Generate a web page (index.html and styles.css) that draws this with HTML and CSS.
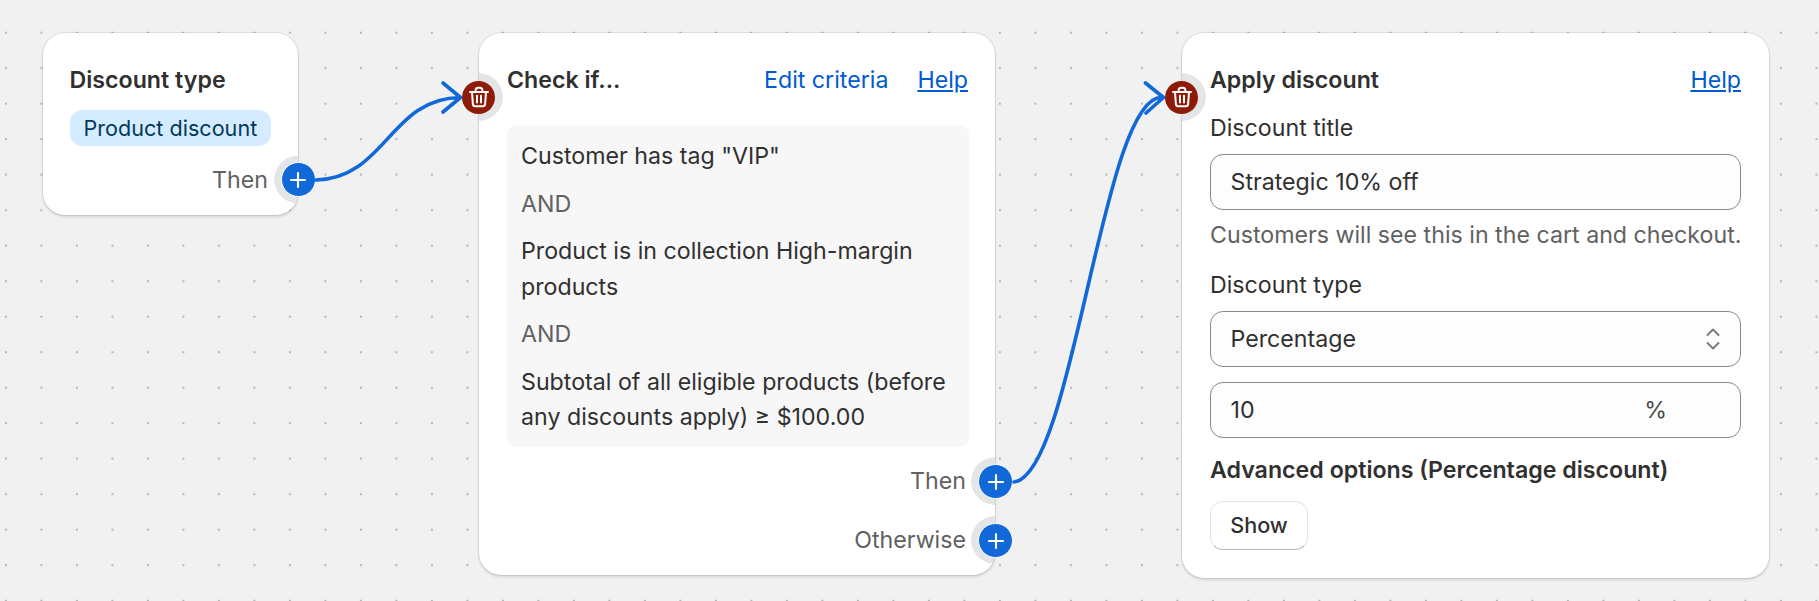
FILE: index.html
```html
<!DOCTYPE html>
<html lang="en">
<head>
<meta charset="utf-8">
<title>Discount flow</title>
<link rel="stylesheet" href="styles.css">
</head>
<body>
<main class="canvas">
  <section class="node node-type">
    <h2 class="title">Discount type</h2>
    <div class="badge-row"><span class="badge">Product discount</span></div>
    <div class="outlet"><span class="outlet-label">Then</span></div>
    <button class="handle add handle-type" aria-label="Add"><svg viewBox="0 0 20 20"><path d="M10 3.6v12.8M3.6 10h12.8"/></svg></button>
  </section>

  <section class="node node-check">
    <header class="head">
      <h2 class="title">Check if...</h2>
      <nav class="links"><a class="link plain">Edit criteria</a><a class="link">Help</a></nav>
    </header>
    <div class="criteria">
      <p>Customer has tag "VIP"</p>
      <p class="muted">AND</p>
      <p>Product is in collection High-margin products</p>
      <p class="muted">AND</p>
      <p>Subtotal of all eligible products (before any discounts apply) ≥ $100.00</p>
    </div>
    <div class="outlets">
      <div class="outlet"><span class="outlet-label">Then</span></div>
      <div class="outlet"><span class="outlet-label">Otherwise</span></div>
    </div>
    <button class="handle del handle-left" aria-label="Delete"><svg viewBox="0 0 24 24"><path d="M3 7h18M8.6 6.6V5.4A2.6 2.6 0 0 1 11.2 2.8h1.6a2.6 2.6 0 0 1 2.6 2.6v1.2M5 7.4l.9 11.8a2.2 2.2 0 0 0 2.2 2h7.8a2.2 2.2 0 0 0 2.2-2L19 7.4M10 10.8v6.6M14 10.8v6.6"/></svg></button>
    <button class="handle add handle-then" aria-label="Add"><svg viewBox="0 0 20 20"><path d="M10 3.6v12.8M3.6 10h12.8"/></svg></button>
    <button class="handle add handle-other" aria-label="Add"><svg viewBox="0 0 20 20"><path d="M10 3.6v12.8M3.6 10h12.8"/></svg></button>
  </section>

  <section class="node node-apply">
    <header class="head">
      <h2 class="title">Apply discount</h2>
      <nav class="links links-flush"><a class="link">Help</a></nav>
    </header>
    <label class="label label-title">Discount title</label>
    <div class="field field-title">Strategic 10% off</div>
    <p class="hint">Customers will see this in the cart and checkout.</p>
    <label class="label label-type">Discount type</label>
    <div class="field field-select">Percentage
      <svg class="chev" viewBox="0 0 14 24"><path d="M1.5 8 7 2.5 12.5 8M1.5 16 7 21.5 12.5 16"/></svg>
    </div>
    <div class="field field-num"><span>10</span><span class="suffix">%</span></div>
    <h3 class="title adv">Advanced options (Percentage discount)</h3>
    <button class="btn">Show</button>
    <button class="handle del handle-left" aria-label="Delete"><svg viewBox="0 0 24 24"><path d="M3 7h18M8.6 6.6V5.4A2.6 2.6 0 0 1 11.2 2.8h1.6a2.6 2.6 0 0 1 2.6 2.6v1.2M5 7.4l.9 11.8a2.2 2.2 0 0 0 2.2 2h7.8a2.2 2.2 0 0 0 2.2-2L19 7.4M10 10.8v6.6M14 10.8v6.6"/></svg></button>
  </section>

  <svg class="wires" viewBox="0 0 1819 601">
    <path d="M316 180C386 178 390 98 460.5 97.5M443 83 460.5 97.5 443 112"/>
    <path d="M1014 482C1074 475 1103 88 1163.5 97.5M1145.5 83 1163.5 97.5 1146 113"/>
  </svg>
</main>
</body>
</html>
```

FILE: styles.css
```css
* { box-sizing: border-box; }
html, body { margin: 0; height: 100%; }
body { font-family: Inter, "Noto Sans", sans-serif; color: #303030; font-size: 23.2px; line-height: 30px; }
.canvas {
  position: relative; width: 1819px; height: 601px; overflow: hidden;
  background-color: #f1f1f1;
  background-image: radial-gradient(circle, #b5b5b5 1px, transparent 1.4px);
  background-size: 35.5px 35.5px;
  background-position: -11.85px 14.95px;
}
.node {
  position: absolute; top: 33px; border-radius: 22px;
  box-shadow: 0 0 0 1px rgba(0,0,0,.08), 0 2px 3px rgba(0,0,0,.12);
  padding: 33px 28px 0;
}
.node-type {
  left: 42.5px; width: 255.5px; height: 182px; padding-left: 27px;
  background: radial-gradient(circle at 100% 146.5px, #e3e5e7 23.5px, transparent 24px), #fff;
}
.node-check {
  left: 479px; width: 516px; height: 542px; padding-right: 26px;
  background:
    radial-gradient(circle at 0 64px, #e3e5e7 23.5px, transparent 24px),
    radial-gradient(circle at 100% 448px, #e3e5e7 23.5px, transparent 24px),
    radial-gradient(circle at 100% 507px, #e3e5e7 23.5px, transparent 24px),
    #fff;
}
.node-apply {
  left: 1182px; width: 587px; height: 545px;
  background: radial-gradient(circle at 0 64px, #e3e5e7 23.5px, transparent 24px), #fff;
}
.title { margin: 0; font-size: 23.2px; line-height: 28px; font-weight: 620; color: #303030; white-space: nowrap; }
.badge-row { margin-top: 16px; display: flex; }
.badge { background: #d5ebff; color: #003a5a; border-radius: 12px; padding: 0 14px; height: 36px; line-height: 36px; font-size: 21.6px; white-space: nowrap; }
.outlet { display: flex; justify-content: flex-end; }
.outlet-label { color: #616161; }
.node-type .outlet { margin-top: 19px; margin-right: 2px; }
.head { display: flex; justify-content: space-between; align-items: center; height: 28px; }
.links { display: flex; gap: 29px; margin-right: 1px; }
.links-flush { margin-right: 0; }
.link { color: #005bd3; text-decoration: underline; line-height: 28px; }
.link.plain { text-decoration: none; }
.criteria { margin-top: 31px; background: #f7f7f7; border-radius: 9px; padding: 14.25px 14px 11.25px; }
.criteria p { margin: 0 0 12px; line-height: 35.5px; }
.criteria p:last-child { margin: 0; }
.muted { color: #616161; }
.outlets { margin-top: 19px; display: flex; flex-direction: column; gap: 29px; margin-right: 3px; }
.handle { position: absolute; width: 35px; height: 35px; border: 1.5px solid #fff; border-radius: 50%; padding: 0; display: flex; align-items: center; justify-content: center; }
.handle svg { fill: none; stroke: #fff; stroke-linecap: round; stroke-linejoin: round; }
.add { background: #1068d9; }
.add svg { width: 22px; height: 22px; stroke-width: 1.9; }
.del { background: #8e1a08; border: 0; width: 33px; height: 33px; }
.del svg { width: 24px; height: 24px; stroke-width: 2; }
.handle-type { right: -17.5px; top: 129px; }
.handle-left { left: -17px; top: 47.5px; }
.handle-then { right: -18px; top: 431px; }
.handle-other { right: -18px; top: 490px; }
.label { display: block; }
.label-title { margin-top: 18.5px; }
.field { height: 56px; border: 1.5px solid #8a8a8a; border-radius: 13px; background: #fdfdfd; padding: 0 19.5px; display: flex; align-items: center; }
.field-title { margin-top: 11px; }
.field-select { justify-content: space-between; margin-top: 11px; }
.chev { width: 14px; height: 24px; fill: none; stroke: #7a7a7a; stroke-width: 1.9; stroke-linecap: round; stroke-linejoin: round; margin-right: 1px; }
.field-num { margin-top: 15px; position: relative; }
.suffix { position: absolute; right: 73px; color: #4a4a4a; }
.hint { margin: 10.5px 0 0; color: #616161; white-space: nowrap; }
.label-type { margin-top: 19.5px; }
.adv { margin-top: 18px; }
.btn { display: block; margin-top: 17px; font: 500 21.6px Inter, sans-serif; color: #303030; width: 98px; height: 49px; background: #fff; border: 1.5px solid #e3e3e3; border-bottom-color: #b5b5b5; border-radius: 13px; padding: 0; }
.wires { position: absolute; left: 0; top: 0; width: 1819px; height: 601px; pointer-events: none; fill: none; stroke: #1068d9; stroke-width: 3.6; stroke-linecap: round; stroke-linejoin: round; }
```
